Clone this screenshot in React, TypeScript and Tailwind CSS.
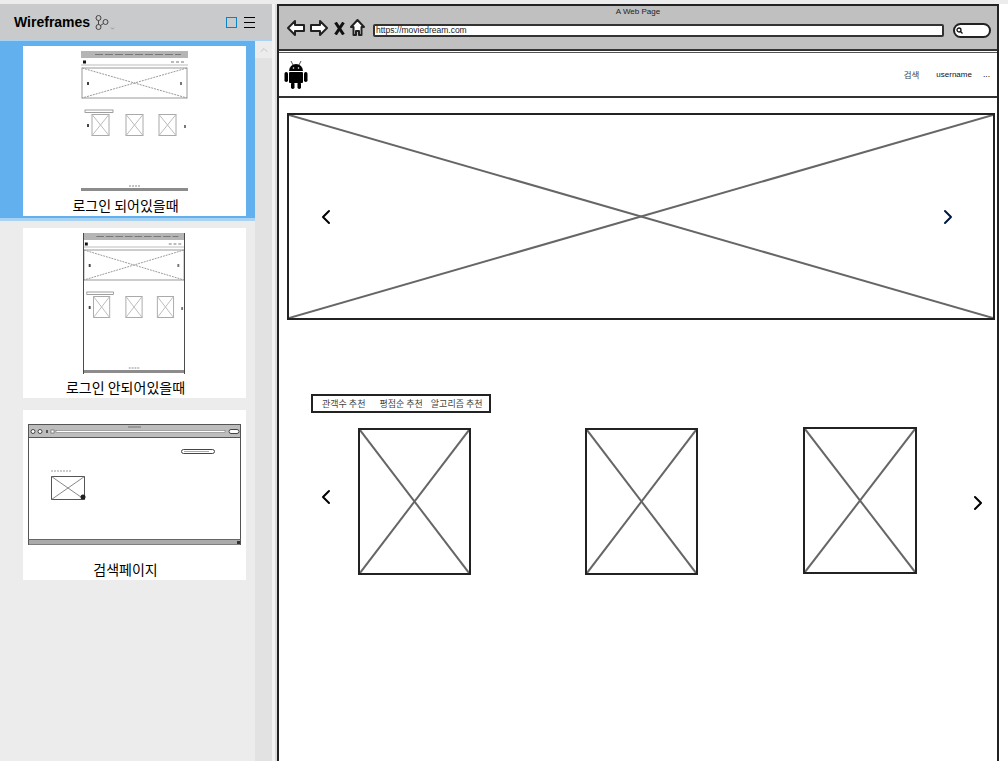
import { ChevronLeft, ChevronRight, ChevronDown, ChevronUp } from "lucide-react";

const KO = "font-['Noto_Sans_CJK_KR','Noto_Sans',sans-serif]";

// wireframe image placeholder: box with a cross through it
function XBox({ className }: { className: string }) {
  return (
    <div className={`border-2 border-[#222] bg-white shrink-0 ${className}`}>
      <svg className="w-full h-full block" viewBox="0 0 100 100" preserveAspectRatio="none">
        <line x1="0" y1="0" x2="100" y2="100" stroke="#666" strokeWidth="2" vectorEffect="non-scaling-stroke" />
        <line x1="100" y1="0" x2="0" y2="100" stroke="#666" strokeWidth="2" vectorEffect="non-scaling-stroke" />
      </svg>
    </div>
  );
}

function Arrow({ d, w = 18 }: { d: string; w?: number }) {
  return (
    <svg width={w} height="18" viewBox={`0 0 ${w} 18`} className="shrink-0">
      <path d={d} fill="#fff" stroke="#222" strokeWidth="2" strokeLinejoin="round" />
    </svg>
  );
}

function Android() {
  return (
    <svg width="24" height="28" viewBox="0 0 24 28" className="mt-[1px]">
      <path d="M7 0l2 4M17 0l-2 4" stroke="#555" strokeWidth="1" />
      <path d="M5 10a7 7 0 0 1 14 0z" fill="#000" />
      <rect x="5" y="11" width="14" height="11" rx="1" fill="#000" />
      <rect x="0.5" y="11" width="3.5" height="10" rx="1.7" fill="#000" />
      <rect x="20" y="11" width="3.5" height="10" rx="1.7" fill="#000" />
      <rect x="7" y="21" width="3.5" height="7" rx="1.7" fill="#000" />
      <rect x="13.5" y="21" width="3.5" height="7" rx="1.7" fill="#000" />
      <circle cx="9.5" cy="7" r="0.8" fill="#fff" />
      <circle cx="14.5" cy="7" r="0.8" fill="#fff" />
    </svg>
  );
}

// tiny desktop-page mockups shown in the page list
function ThumbMain({ closed }: { closed?: boolean }) {
  return (
    <svg width={closed ? 102 : 107} height="141" viewBox="0 0 107 141" preserveAspectRatio="none" className={`block blur-[0.3px] ${closed ? "-ml-[2px]" : ""}`}>
      <rect x="0" y="0" width="107" height="7" fill="#b5b5b5" />
      <line x1="14" y1="3.5" x2="100" y2="3.5" stroke="#777" strokeWidth="1" strokeDasharray="8 2" />
      <rect x="2" y="9.5" width="3" height="3" fill="#111" />
      <line x1="90" y1="11" x2="104" y2="11" stroke="#777" strokeWidth="1" strokeDasharray="3 2" />
      <line x1="0" y1="14" x2="107" y2="14" stroke="#bbb" />
      <rect x="1" y="17" width="105" height="30" fill="#fff" stroke="#999" />
      <path d="M1 17L106 47M106 17L1 47" stroke="#999" strokeDasharray="2 1" />
      <rect x="4" y="59" width="28" height="2.5" fill="#fff" stroke="#777" strokeWidth="0.7" />
      {[11, 45, 78].map((x) => (
        <g key={x}>
          <rect x={x} y="63.5" width="17" height="21" fill="#fff" stroke="#aaa" />
          <path d={`M${x} 63.5l17 21M${x + 17} 63.5l-17 21`} stroke="#bbb" />
        </g>
      ))}
      <rect x="6" y="31" width="2" height="3" fill="#444" />
      <rect x="99" y="31" width="2" height="3" fill="#777" />
      <rect x="6" y="73" width="2" height="3" fill="#444" />
      <rect x="103" y="74" width="2" height="3" fill="#777" />
      <line x1="48" y1="135" x2="59" y2="135" stroke="#888" strokeDasharray="2 1" />
      <rect x="0" y="137" width="107" height="3" fill="#8c8c8c" />
      {closed && <rect x="0" y="0" width="1" height="141" fill="#444" />}
      {closed && <rect x="106" y="0" width="1" height="141" fill="#444" />}
    </svg>
  );
}

function ThumbSearch() {
  return (
    <svg width="213" height="122" viewBox="0 0 213 122" className="block">
      <rect x="0.5" y="0.5" width="212" height="120" fill="#fff" stroke="#555" />
      <rect x="1" y="1" width="211" height="12" fill="#bdbdbd" />
      <line x1="0" y1="13.5" x2="213" y2="13.5" stroke="#555" />
      <circle cx="5" cy="7.5" r="2" fill="#fff" stroke="#444" />
      <circle cx="12" cy="7.5" r="2" fill="#fff" stroke="#444" />
      <rect x="18" y="6" width="2" height="3" fill="#555" />
      <rect x="23" y="6" width="3" height="3" fill="#fff" stroke="#555" strokeWidth="0.6" />
      <rect x="28" y="6.5" width="169" height="2" fill="#fff" stroke="#666" strokeWidth="0.5" />
      <rect x="201" y="5.5" width="10" height="4" rx="2" fill="#fff" stroke="#444" />
      <rect x="100" y="2.5" width="13" height="1" fill="#777" />
      <rect x="153.5" y="25.5" width="33" height="4" rx="2" fill="#fff" stroke="#444" />
      <line x1="156" y1="27.5" x2="181" y2="27.5" stroke="#aaa" />
      <line x1="23" y1="47" x2="44" y2="47" stroke="#999" strokeDasharray="2 1" />
      <rect x="23.5" y="52.5" width="33" height="23" fill="#fff" stroke="#555" />
      <path d="M23.5 52.5l33 23M56.5 52.5l-33 23" stroke="#888" />
      <circle cx="55" cy="73" r="2.5" fill="#222" />
      <rect x="1" y="116" width="211" height="4.5" fill="#aaa" />
      <line x1="0" y1="115.5" x2="213" y2="115.5" stroke="#666" />
      <rect x="209" y="117" width="3" height="3" fill="#333" />
    </svg>
  );
}

function PageCard({ label, selected, children, pt }: { label: string; selected?: boolean; children: React.ReactNode; pt: string }) {
  return (
    <div className={`pl-[23px] pr-[9px] py-[5px] ${selected ? "bg-[#63b0ee] border-b-[3px] border-[#a9d3f3] pb-[2px]" : ""}`}>
      <div className={`w-[223px] h-[170px] bg-white flex flex-col items-center ${pt}`}>
        <div className="h-[141px]">{children}</div>
        <div className={`${KO} mt-auto pr-[18px] text-[14px] leading-[20px] pb-[1px] text-black`}>{label}</div>
      </div>
    </div>
  );
}

function Sidebar() {
  return (
    <aside className="w-[272px] h-full flex flex-col shrink-0">
      <header className="h-[36px] bg-[#c9cacb] flex items-center pl-[14px] pr-[17px] shrink-0">
        <span className="font-['Liberation_Sans',sans-serif] font-bold text-[14px] text-black">Wireframes</span>
        <svg width="14" height="15" viewBox="0 0 14 15" className="ml-[5px]" fill="none" stroke="#444">
          <circle cx="3.5" cy="3" r="2.5" />
          <circle cx="10.5" cy="7" r="2.5" />
          <circle cx="3.5" cy="12" r="2.5" />
          <path d="M3.5 5.5v4M5.5 10.5l3-2" />
        </svg>
        <ChevronDown size={5} className="ml-[1px] mt-[12px] text-[#555]" />
        <div className="ml-auto w-[11px] h-[11px] border border-[#0a84c6]" />
        <svg width="11" height="11" viewBox="0 0 11 11" className="ml-[7px]" stroke="#000">
          <path d="M0 .5h11M0 5.5h11M0 10.5h11" />
        </svg>
      </header>
      <div className="flex-1 flex min-h-0 border-t border-[#a9d3f3]">
        <div className="flex-1 flex flex-col gap-[2px] bg-[#ececec]">
          <PageCard label="로그인 되어있을때" selected pt="pt-[5px]">
            <ThumbMain />
          </PageCard>
          <PageCard label="로그인 안되어있을때" pt="pt-[5px]">
            <ThumbMain closed />
          </PageCard>
          <PageCard label="검색페이지" pt="pt-[14px]">
            <ThumbSearch />
          </PageCard>
        </div>
        <div className="w-[17px] bg-[#e2e2e2] shrink-0">
          <div className="h-[17px] bg-[#ececec] flex items-center justify-center">
            <ChevronUp size={12} className="text-[#c4c4c4]" />
          </div>
        </div>
      </div>
    </aside>
  );
}

function BrowserChrome() {
  return (
    <div className="h-[45px] bg-[#c0c0c0] border-b-2 border-[#333] flex flex-col shrink-0">
      <div className="text-center font-['Liberation_Sans',sans-serif] text-[8px] leading-[10px] pt-[1px] text-[#222]">A Web Page</div>
      <div className="flex items-center pl-[8px] pr-[6px] mt-[1px]">
        <Arrow d="M1 9l7-7v4h9v6H8v4z" />
        <div className="ml-[5px]">
          <Arrow d="M17 9l-7-7v4H1v6h9v4z" />
        </div>
        <svg width="11" height="13" viewBox="0 0 11 13" className="ml-[6px] shrink-0" stroke="#111" strokeWidth="3">
          <path d="M1.5 0.5l8 12M9.5 0.5l-8 12" />
        </svg>
        <div className="ml-[5px]">
          <Arrow w={15} d="M7.5 1L1 8h2.5v8H6v-4h3v4h2.5V8H14z" />
        </div>
        <div className="ml-[8px] mt-[5px] h-[13px] w-[572px] bg-white border-2 border-[#333] rounded-[2px] flex items-center pl-[1px]">
          <span className="font-['Liberation_Sans',sans-serif] text-[8.5px] leading-none text-[#1a1a1a]">https://moviedream.com</span>
        </div>
        <div className="ml-[9px] mt-[5px] h-[15px] w-[38px] bg-white border-2 border-[#222] rounded-full flex items-center pl-[1px]">
          <svg width="7" height="7" viewBox="0 0 7 7" fill="none" stroke="#111" strokeWidth="1.3">
            <circle cx="3" cy="3" r="2" />
            <path d="M4.5 4.5L6.5 6.5" />
          </svg>
        </div>
      </div>
    </div>
  );
}

export default function App() {
  return (
    <div className="w-[1008px] h-[761px] overflow-hidden bg-[#ececec] pt-[4px] flex">
      <Sidebar />
      <div className="w-[5px] bg-[#f4f4f4] border-r-2 border-[#dcdcdc] shrink-0" />
      <main className="w-[722px] h-[757px] bg-white border-x-2 border-t-2 border-[#222] flex flex-col shrink-0">
        <BrowserChrome />
        <nav className="h-[46px] mt-[1px] border-t border-t-[#555] border-b-2 border-b-[#333] flex items-center pl-[5px] pr-[7px] shrink-0">
          <Android />
          <span className={`${KO} ml-auto text-[8.5px] text-[#444]`}>검색</span>
          <span className="ml-[17px] font-['Liberation_Sans',sans-serif] text-[8px] text-[#111]">username</span>
          <span className="ml-[11px] font-['Liberation_Sans',sans-serif] text-[8.5px] text-[#111]">...</span>
        </nav>
        <div className="relative ml-[8px] mt-[15px] w-[708px] h-[207px] shrink-0">
          <XBox className="w-full h-full" />
          <ChevronLeft size={24} strokeWidth={2} className="absolute left-[27px] top-[92px] text-black" />
          <ChevronRight size={24} strokeWidth={2} className="absolute right-[35px] top-[92px] text-[#001a40]" />
        </div>
        <div className={`${KO} ml-[32px] mt-[74px] w-[180px] h-[19px] border-2 border-[#222] flex items-center pl-[9px] text-[9px] text-[#444] whitespace-nowrap shrink-0`}>
          <span>관객수 추천</span>
          <span className="ml-[14px]">평점순 추천</span>
          <span className="ml-[8px]">알고리즘 추천</span>
        </div>
        <div className="flex items-start mt-[15px] pl-[35px] shrink-0">
          <ChevronLeft size={24} strokeWidth={2} className="mt-[57px] text-black shrink-0" />
          <XBox className="ml-[20px] w-[113px] h-[147px]" />
          <XBox className="ml-[114px] w-[113px] h-[147px]" />
          <XBox className="ml-[105px] -mt-[1px] w-[114px] h-[147px]" />
          <ChevronRight size={24} strokeWidth={2} className="ml-[49px] mt-[63px] text-black shrink-0" />
        </div>
      </main>
      <div className="flex-1 bg-white" />
    </div>
  );
}
